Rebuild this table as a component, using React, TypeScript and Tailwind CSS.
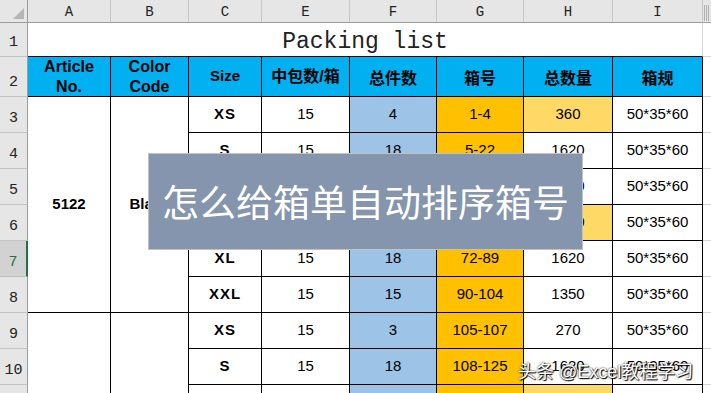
import React from 'react';

const cols = ['A', 'B', 'C', 'E', 'F', 'G', 'H', 'I'];

type Row = { n: number; size: string; qty: string; pcs: string; box: string; total: string; yellow?: boolean; dims: string };

const rows: Row[] = [
  { n: 3, size: 'XS', qty: '15', pcs: '4', box: '1-4', total: '360', yellow: true, dims: '50*35*60' },
  { n: 4, size: 'S', qty: '15', pcs: '18', box: '5-22', total: '1620', dims: '50*35*60' },
  { n: 5, size: 'M', qty: '15', pcs: '18', box: '23-40', total: '1620', dims: '50*35*60' },
  { n: 6, size: 'L', qty: '15', pcs: '31', box: '41-71', total: '2790', yellow: true, dims: '50*35*60' },
  { n: 7, size: 'XL', qty: '15', pcs: '18', box: '72-89', total: '1620', dims: '50*35*60' },
  { n: 8, size: 'XXL', qty: '15', pcs: '15', box: '90-104', total: '1350', dims: '50*35*60' },
  { n: 9, size: 'XS', qty: '15', pcs: '3', box: '105-107', total: '270', dims: '50*35*60' },
  { n: 10, size: 'S', qty: '15', pcs: '18', box: '108-125', total: '1620', dims: '50*35*60' },
  // row 11 only shows its top edge
  { n: 11, size: '', qty: '', pcs: '', box: '', total: '', yellow: true, dims: '' },
];

const cell = 'flex items-center justify-center border-r border-b border-black text-[15px] text-black';

const RowHead = ({ n, selected }: { n: number; selected?: boolean }) => (
  <div
    className={
      selected
        ? 'flex items-end justify-center pb-[2px] bg-[#d2d2d2] border-b border-[#bcbcbc] border-r-2 border-r-[#217346] text-[#217346] text-[15px]'
        : 'flex items-end justify-center pb-[2px] bg-[#e6e6e6] border-b border-[#c4c4c4] border-r border-r-[#9c9c9c] text-[#222] text-[15px]'
    }
    style={{ fontFamily: '"Liberation Mono", monospace' }}
  >
    {n === 11 ? '' : n}
  </div>
);

export default function App() {
  return (
    <div className="relative w-[711px] h-[393px] overflow-hidden bg-white" style={{ fontFamily: '"Liberation Sans", Arial, sans-serif' }}>
      <div className="grid grid-cols-[28px_83px_78px_73px_88px_87px_87px_89px_90px_1fr] grid-rows-[23px_34px_40px_repeat(9,36px)]">
        {/* column headers */}
        <div className="relative bg-[#e6e6e6] border-r border-b border-[#9c9c9c]">
          <div className="absolute right-[3px] bottom-[3px] w-0 h-0 border-l-[11px] border-l-transparent border-b-[11px] border-b-[#b5b5b5]" />
        </div>
        {cols.map((c) => (
          <div
            key={c}
            className="flex items-center justify-center pt-[2px] bg-[#e6e6e6] border-r border-[#c6c6c6] border-b border-b-[#9c9c9c] text-[14px] text-[#222]"
            style={{ fontFamily: '"Liberation Mono", monospace' }}
          >
            {c}
          </div>
        ))}
        <div className="flex justify-start gap-[1px] pl-[1px] pt-[5px] bg-[#e6e6e6] border-b border-[#9c9c9c]">
          <span className="w-px h-[16px] bg-[#b0b0b0]" />
          <span className="w-px h-[16px] bg-[#b0b0b0]" />
          <span className="w-px h-[16px] bg-[#b0b0b0]" />
        </div>

        {/* row 1 */}
        <RowHead n={1} />
        <div
          className="col-span-8 flex items-end justify-center pb-[2px] border-b border-black border-r border-r-[#d4d4d4] text-[23px] text-[#222] leading-none"
          style={{ fontFamily: '"Liberation Mono", monospace' }}
        >
          Packing list
        </div>
        <div className="border-b border-[#d4d4d4]" />

        {/* row 2 */}
        <RowHead n={2} />
        <div className={`${cell} bg-[#00b0f0] font-bold text-[16px] leading-[20px] text-center`}>Article<br />No.</div>
        <div className={`${cell} bg-[#00b0f0] font-bold text-[16px] leading-[20px] text-center`}>Color<br />Code</div>
        <div className={`${cell} bg-[#00b0f0] font-bold`}>Size</div>
        <div className={`${cell} bg-[#00b0f0] font-bold text-[16px]`} style={{ fontFamily: '"Liberation Sans", "Noto Sans CJK SC", sans-serif' }}>中包数/箱</div>
        <div className={`${cell} bg-[#00b0f0] font-bold text-[16px]`} style={{ fontFamily: '"Noto Sans CJK SC", sans-serif' }}>总件数</div>
        <div className={`${cell} bg-[#00b0f0] font-bold text-[16px]`} style={{ fontFamily: '"Noto Sans CJK SC", sans-serif' }}>箱号</div>
        <div className={`${cell} bg-[#00b0f0] font-bold text-[16px]`} style={{ fontFamily: '"Noto Sans CJK SC", sans-serif' }}>总数量</div>
        <div className={`${cell} bg-[#00b0f0] font-bold text-[16px]`} style={{ fontFamily: '"Noto Sans CJK SC", sans-serif' }}>箱规</div>
        <div className="border-b border-[#d4d4d4]" />

        {/* data rows */}
        {rows.map((r) => (
          <React.Fragment key={r.n}>
            <RowHead n={r.n} selected={r.n === 7} />
            {r.n === 3 && <div className={`${cell} row-span-6 font-bold text-[14px]`}>5122</div>}
            {r.n === 3 && <div className={`${cell} row-span-6 font-bold text-[14px]`}>Black</div>}
            {r.n === 9 && <div className={`${cell} row-span-3`} />}
            {r.n === 9 && <div className={`${cell} row-span-3`} />}
            <div className={`${cell} font-bold tracking-[1px]`}>{r.size}</div>
            <div className={cell}>{r.qty}</div>
            <div className={`${cell} bg-[#9dc3e6]`}>{r.pcs}</div>
            <div className={`${cell} bg-[#ffc000]`}>{r.box}</div>
            <div className={`${cell} ${r.yellow ? 'bg-[#ffd966]' : ''}`}>{r.total}</div>
            <div className={cell}>{r.dims}</div>
            <div className="border-b border-[#d4d4d4]" />
          </React.Fragment>
        ))}
      </div>

      {/* title overlay */}
      <div
        className="absolute left-[148px] top-[153px] w-[435px] h-[97px] flex items-center justify-center bg-[#8495ad] border border-[#c2c2c2] text-white text-[37px] whitespace-nowrap"
        style={{ fontFamily: '"Noto Sans CJK SC", sans-serif' }}
      >
        怎么给箱单自动排序箱号
      </div>

      {/* watermark */}
      <div
        className="absolute left-[518px] top-[359px] text-[18px] text-white whitespace-nowrap [text-shadow:0_0_2px_#000,1px_1px_1px_#000]"
        style={{ fontFamily: '"Liberation Sans", "Noto Sans CJK SC", sans-serif' }}
      >
        头条 @Excel教程学习
      </div>
    </div>
  );
}
